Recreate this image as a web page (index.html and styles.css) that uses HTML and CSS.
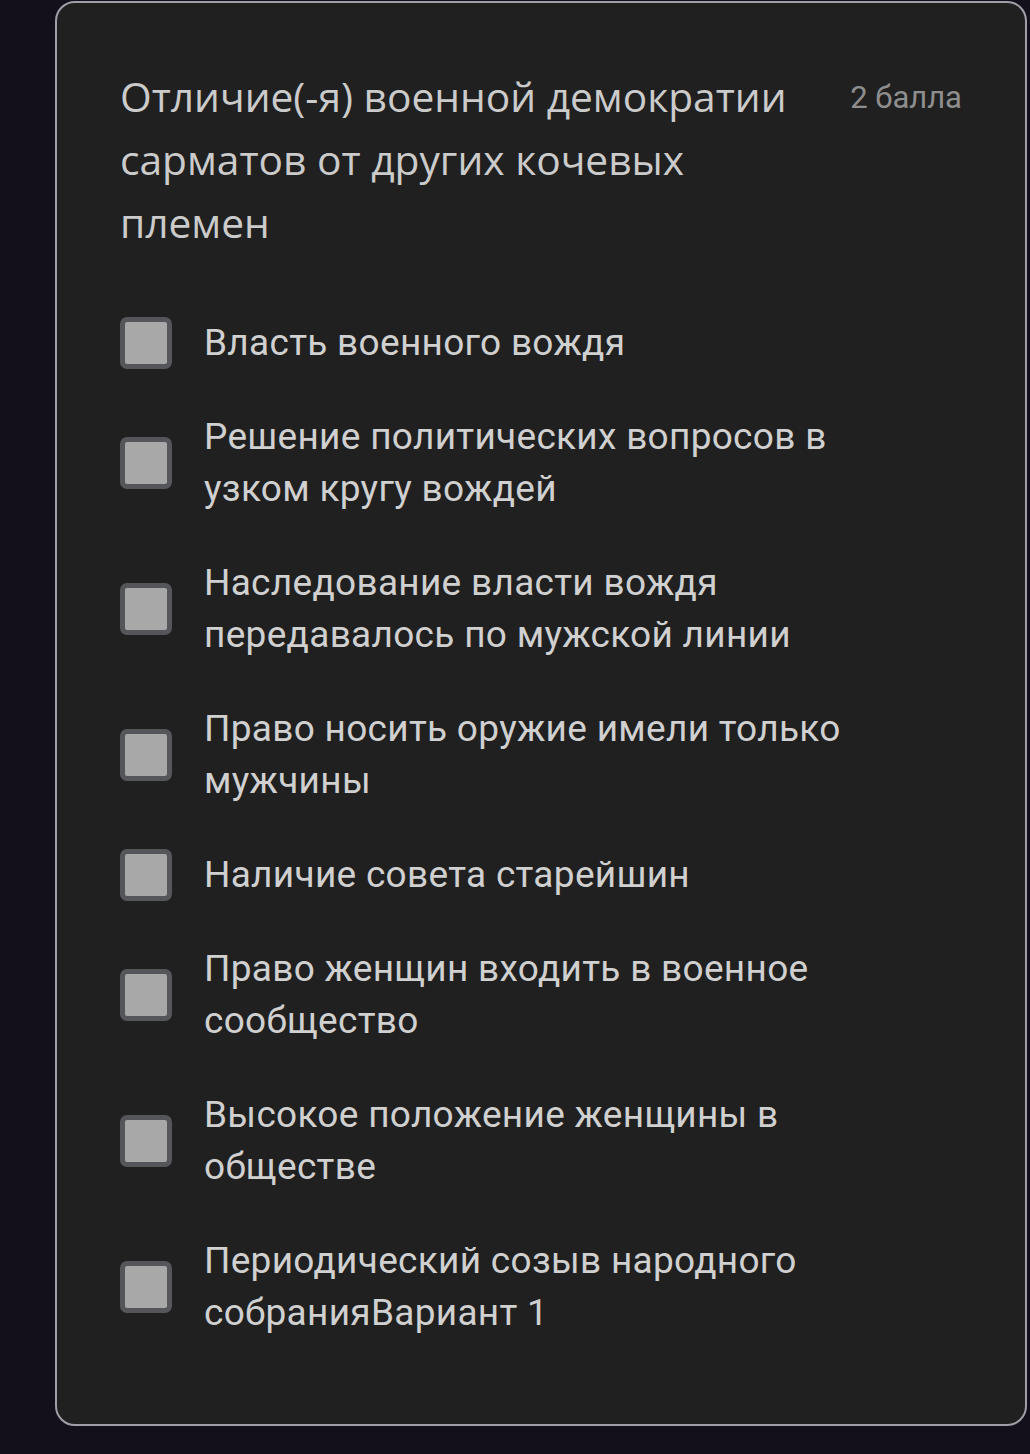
FILE: index.html
```html
<!DOCTYPE html>
<html lang="ru">
<head>
    <meta charset="UTF-8">
    <meta name="viewport" content="width=device-width, initial-scale=1.0">
    <title>Вопрос</title>
    <link rel="stylesheet" href="styles.css">
</head>
<body>
    <div class="question-card">
        <div class="question-header">
            <h2 class="question-title">Отличие(-я) военной демократии сарматов от других кочевых племен</h2>
            <span class="points">2 балла</span>
        </div>

        <ul class="options">
            <li class="option"><span class="checkbox"></span><span class="option-text">Власть военного вождя</span></li>
            <li class="option"><span class="checkbox"></span><span class="option-text">Решение политических вопросов в узком кругу вождей</span></li>
            <li class="option"><span class="checkbox"></span><span class="option-text">Наследование власти вождя передавалось по мужской линии</span></li>
            <li class="option"><span class="checkbox"></span><span class="option-text">Право носить оружие имели только мужчины</span></li>
            <li class="option"><span class="checkbox"></span><span class="option-text">Наличие совета старейшин</span></li>
            <li class="option"><span class="checkbox"></span><span class="option-text">Право женщин входить в военное сообщество</span></li>
            <li class="option"><span class="checkbox"></span><span class="option-text">Высокое положение женщины в обществе</span></li>
            <li class="option"><span class="checkbox"></span><span class="option-text">Периодический созыв народного собранияВариант 1</span></li>
        </ul>
    </div>
</body>
</html>
```

FILE: styles.css
```css
* {
    margin: 0;
    padding: 0;
    box-sizing: border-box;
}

body {
    background: #13101c;
    font-family: Roboto, "Noto Sans", sans-serif;
    padding: 1px 3px 0 55px;
}

.question-card {
    background: #202020;
    border: 2px solid #a09ea6;
    border-radius: 20px;
    padding: 62px 63px 84px 63px;
    min-height: 1425px;
}

.question-header {
    display: flex;
    justify-content: space-between;
    align-items: flex-start;
    gap: 40px;
}

.question-title {
    font-family: "Open Sans", sans-serif;
    font-weight: 400;
    font-size: 40.7px;
    line-height: 63px;
    color: #cbcbcb;
    max-width: 700px;
}

.points {
    font-size: 31px;
    line-height: 63px;
    color: #8e8e8e;
    white-space: nowrap;
    padding-top: 1px;
}

.options {
    list-style: none;
    margin-top: 63px;
    display: flex;
    flex-direction: column;
    gap: 42px;
}

.option {
    display: flex;
    align-items: center;
    gap: 32px;
}

.checkbox {
    flex: none;
    width: 52px;
    height: 52px;
    background: #a8a8a8;
    border: 5px solid #54565a;
    border-radius: 7px;
}

.option-text {
    font-size: 37px;
    line-height: 52px;
    color: #d0d0d0;
    letter-spacing: 0.3px;
    max-width: 660px;
}
```
